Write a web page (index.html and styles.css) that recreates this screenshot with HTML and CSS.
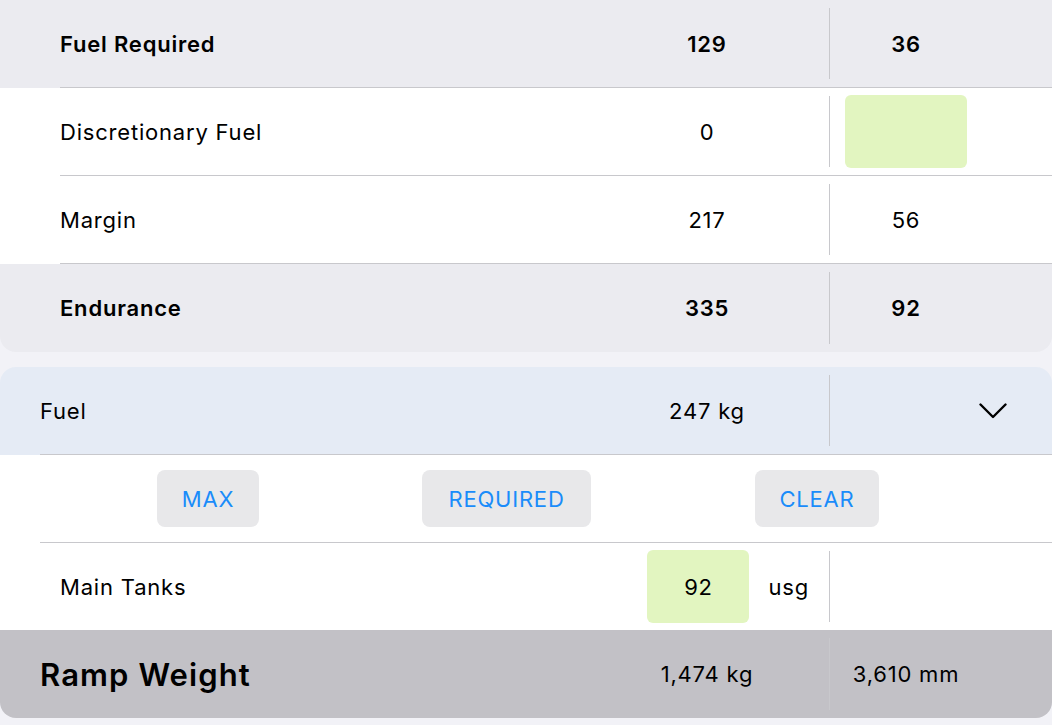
FILE: index.html
```html
<!DOCTYPE html>
<html lang="en">
<head>
  <meta charset="UTF-8">
  <title>Fuel</title>
  <link rel="stylesheet" href="styles.css">
</head>
<body>
  <section class="card card-top">
    <div class="row row-gray">
      <div class="row-inner inset-60 bold">
        <div class="label">Fuel Required</div>
        <div class="value">129</div>
        <div class="divider"></div>
        <div class="value">36</div>
      </div>
    </div>
    <div class="row">
      <div class="row-inner inset-60">
        <div class="label">Discretionary Fuel</div>
        <div class="value">0</div>
        <div class="divider"></div>
        <div class="value"><div class="entry entry-wide"></div></div>
      </div>
    </div>
    <div class="row">
      <div class="row-inner inset-60">
        <div class="label">Margin</div>
        <div class="value">217</div>
        <div class="divider"></div>
        <div class="value">56</div>
      </div>
    </div>
    <div class="row row-gray row-last">
      <div class="row-inner inset-60 bold no-line">
        <div class="label">Endurance</div>
        <div class="value">335</div>
        <div class="divider"></div>
        <div class="value">92</div>
      </div>
    </div>
  </section>

  <section class="card card-fuel">
    <div class="row row-blue">
      <div class="row-inner inset-40">
        <div class="label">Fuel</div>
        <div class="value">247 kg</div>
        <div class="divider"></div>
        <div class="chevron-cell">
          <svg width="28" height="16" viewBox="0 0 28 16">
            <polyline points="1.5,1.5 14,14 26.5,1.5" fill="none" stroke="#000" stroke-width="2.4" stroke-linecap="round" stroke-linejoin="round"/>
          </svg>
        </div>
      </div>
    </div>
    <div class="row">
      <div class="button-row inset-40">
        <button class="pill pill-max">MAX</button>
        <button class="pill pill-req">REQUIRED</button>
        <button class="pill pill-clear">CLEAR</button>
      </div>
    </div>
    <div class="row">
      <div class="row-inner row-tanks inset-60 no-line">
        <div class="label">Main Tanks</div>
        <div class="value value-entry">
          <div class="entry entry-tank">92</div>
          <span class="unit">usg</span>
        </div>
        <div class="divider"></div>
        <div class="value"></div>
      </div>
    </div>
    <div class="row row-total row-last">
      <div class="row-inner inset-40 no-line">
        <div class="label label-big">Ramp Weight</div>
        <div class="value">1,474 kg</div>
        <div class="divider"></div>
        <div class="value">3,610 mm</div>
      </div>
    </div>
  </section>
</body>
</html>
```

FILE: styles.css
```css
body {
  margin: 0;
  background: #f2f2f7;
  font-family: Inter, "Noto Sans", sans-serif;
  font-size: 22px;
  letter-spacing: 0.8px;
  color: #000;
}

.card {
  overflow: hidden;
}

.card-top {
  border-radius: 0 0 16px 16px;
}

.card-fuel {
  margin-top: 15px;
  border-radius: 16px;
}

.row {
  background: #fff;
}

.row-gray {
  background: #ebebf0;
}

.row-blue {
  background: #e5ebf5;
}

.row-total {
  background: #c2c1c6;
}

.row-inner {
  display: grid;
  grid-template-columns: 1fr 244px 1px 152px 70px;
  height: 87px;
  border-bottom: 1px solid #c8c8cc;
  align-items: center;
}

.row-inner.no-line {
  border-bottom: none;
  height: 88px;
}

.row-inner.row-tanks {
  height: 87px;
}

.inset-60 {
  margin-left: 60px;
}

.inset-40 {
  margin-left: 40px;
}

.bold {
  font-weight: 600;
}

.value {
  display: flex;
  justify-content: center;
  align-items: center;
}

.divider {
  align-self: stretch;
  margin: 8px 0;
  background: #c8c8cc;
}

.entry {
  background: #e2f5c0;
  border-radius: 6px;
  display: flex;
  align-items: center;
  justify-content: center;
}

.entry-wide {
  width: 122px;
  height: 73px;
}

.value-entry {
  justify-content: flex-end;
  padding-right: 20px;
  gap: 19px;
}

.entry-tank {
  width: 102px;
  height: 73px;
}

.chevron-cell {
  grid-column: 4 / 6;
  display: flex;
  justify-content: flex-end;
  padding-right: 45px;
}

.button-row {
  display: flex;
  align-items: center;
  height: 87px;
  border-bottom: 1px solid #c8c8cc;
}

.pill {
  height: 57px;
  border: none;
  border-radius: 8px;
  background: #e8e8ea;
  color: #1a8cfa;
  font-family: inherit;
  font-size: 22px;
  letter-spacing: 0.8px;
  padding: 0;
}

.pill-max {
  width: 102px;
  margin-left: 117px;
}

.pill-req {
  width: 169px;
  margin-left: 163px;
}

.pill-clear {
  width: 124px;
  margin-left: 164px;
}

.label-big {
  font-size: 31px;
  font-weight: 600;
  letter-spacing: 1.1px;
}
```
